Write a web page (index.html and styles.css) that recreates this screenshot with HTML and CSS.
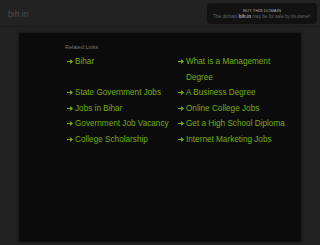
FILE: index.html
```html
<!DOCTYPE html>
<html lang="en">
<head>
  <meta charset="UTF-8" />
  <title>bih.in</title>
  <meta name="viewport" content="width=device-width, initial-scale=1.0" />
  <link rel="stylesheet" href="styles.css">
</head>
<body>

  <!-- barra superior -->
  <div class="top-bar">
    <div class="logo">bih.in</div>
    <div class="buy-box">
      <div class="buy-title">BUY THIS DOMAIN</div>
      <div class="buy-text">The domain <b>bih.in</b> may be for sale by its owner!</div>
    </div>
  </div>

  <div class="container">
    <div class="related-title">Related Links</div>
    <ul class="links">
      <li><a href="#">Bihar</a></li>
      <li><a href="#">What is a Management Degree</a></li>
      <li><a href="#">State Government Jobs</a></li>
      <li><a href="#">A Business Degree</a></li>
      <li><a href="#">Jobs in Bihar</a></li>
      <li><a href="#">Online College Jobs</a></li>
      <li><a href="#">Government Job Vacancy</a></li>
      <li><a href="#">Get a High School Diploma</a></li>
      <li><a href="#">College Scholarship</a></li>
      <li><a href="#">Internet Marketing Jobs</a></li>
    </ul>
  </div>

</body>
</html>
```

FILE: styles.css
```css
body {
  margin: 0;
  font-family: 'Liberation Sans', Arial, sans-serif;
  background-color: #222;
  color: #888;
  height: 245px;
  overflow: hidden;
}

.top-bar {
  height: 26px;
  border-bottom: 1px solid #1a1a1a;
  display: flex;
  justify-content: space-between;
  align-items: center;
  padding: 0 3px 0 8px;
}

.logo {
  font-size: 8.6px;
  color: #4c4c4c;
  margin-top: 1px;
}

.buy-box {
  width: 110px;
  height: 21px;
  box-sizing: border-box;
  background-color: #121212;
  border-radius: 4px;
  text-align: center;
  padding-top: 5px;
  margin-top: 1px;
}

.buy-title {
  font-size: 4.3px;
  color: #aaa;
  line-height: 6px;
}

.buy-text {
  font-size: 4.6px;
  color: #666;
  line-height: 6px;
  white-space: nowrap;
}

.buy-text b {
  color: #aaa;
}

.container {
  margin: 5px 18px 0 18px;
  height: 211px;
  box-sizing: border-box;
  background-color: #0b0b0b;
  border: 1px solid #1b1b1b;
  border-radius: 3px;
  box-shadow: 0 0 2px rgba(0,0,0,0.5);
  padding: 10px 0 0 46px;
}

.related-title {
  font-size: 5.5px;
  color: #777;
  line-height: 8px;
}

.links {
  list-style: none;
  margin: 3px 0 0 0;
  padding: 0;
  display: grid;
  grid-template-columns: 111px 125px;
}

.links li {
  font-size: 8.2px;
  line-height: 15.5px;
  padding-left: 10px;
  position: relative;
  white-space: nowrap;
}

.links li:nth-child(2) {
  white-space: normal;
  width: 98px;
}

.links li::before {
  content: "";
  position: absolute;
  left: 2px;
  top: 5px;
  width: 6px;
  height: 5px;
  background: no-repeat center/6px 5px url("data:image/svg+xml;utf8,<svg xmlns='http://www.w3.org/2000/svg' viewBox='0 0 6 5'><path d='M0 2h3.2V0L6 2.5 3.2 5V3H0z' fill='%2378b012'/></svg>");
}

.links a {
  color: #74ad12;
  text-decoration: none;
}
```
